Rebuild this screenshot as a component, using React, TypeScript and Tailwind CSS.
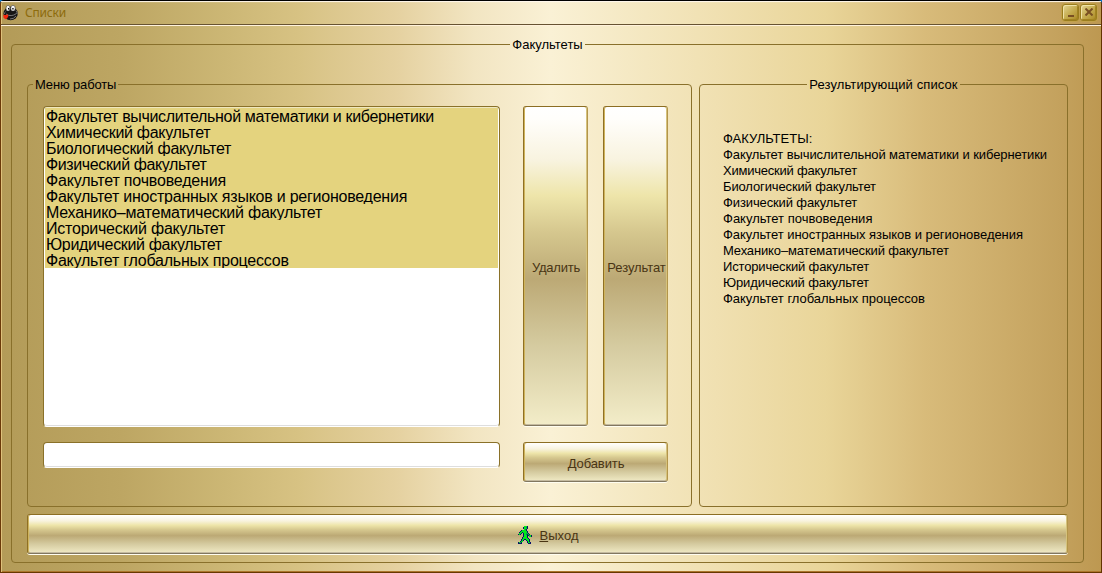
import type { ReactNode } from "react";

type Line = { text: string; list: string; result: string };

const faculties: Line[] = [
  { text: "Факультет вычислительной математики и кибернетики", list: "tracking-[-0.345px]", result: "tracking-[-0.1px]" },
  { text: "Химический факультет", list: "tracking-[-0.3px]", result: "tracking-[-0.22px]" },
  { text: "Биологический факультет", list: "tracking-[-0.3px]", result: "tracking-[-0.13px]" },
  { text: "Физический факультет", list: "tracking-[-0.38px]", result: "tracking-[-0.12px]" },
  { text: "Факультет почвоведения", list: "tracking-[-0.18px]", result: "tracking-[0px]" },
  { text: "Факультет иностранных языков и регионоведения", list: "tracking-[-0.235px]", result: "tracking-[-0.045px]" },
  { text: "Механико–математический факультет", list: "tracking-[-0.23px]", result: "tracking-[-0.14px]" },
  { text: "Исторический факультет", list: "tracking-[-0.23px]", result: "tracking-[-0.16px]" },
  { text: "Юридический факультет", list: "tracking-[-0.34px]", result: "tracking-[-0.13px]" },
  { text: "Факультет глобальных процессов", list: "tracking-[-0.23px]", result: "tracking-[-0.03px]" },
];

const walkerRows = [
  "......gggb....",
  ".....bggtb....",
  ".....bgggb....",
  "......gtb.....",
  "...bggggb.....",
  "..bggggggb....",
  ".bggbggggb....",
  ".ggb.bggtgb...",
  "bgb..bggtbgb..",
  ".....bgggbbggb",
  ".....bgggb.ggb",
  "....bggggb....",
  "....bgggggb...",
  "...bggbbgggb..",
  "...bgb..bggb..",
  "..bgg....bgb..",
  "bggb.....bggb.",
  "bbbb......bbb.",
];

const walkerColors: Record<string, string> = { g: "#00e81c", b: "#08106a", t: "#008a56" };

function MascotIcon() {
  return (
    <svg viewBox="0 0 16 16" className="h-4 w-4 shrink-0">
      <ellipse cx="7.600" cy="8.500" rx="7.200" ry="6.800" fill="#161616" />
      <path d="M2.500 6.500q-1 1-1 2.500M12.800 5.500q1.500 1.500 1.400 3.500" stroke="#6d6d6d" strokeWidth="1" fill="none" />
      <ellipse cx="5" cy="3.200" rx="2" ry="2.900" fill="#f4f4f4" stroke="#222" strokeWidth=".5" />
      <ellipse cx="10" cy="3.200" rx="2.300" ry="2.900" fill="#f4f4f4" stroke="#222" strokeWidth=".5" />
      <path d="M5 3h1.300v1.500H5zM9.300 3h1.300v1.500H9.300z" fill="#000" />
      <path d="M3 9q5 3.500 10.500-.5M7 14q4 0 6-3" stroke="#8f8f8f" strokeWidth=".8" fill="none" />
      <path d="M.3 9.800l2.700.2 1.800-.8 .6 2-1.400 2.200-1.500.9-2-1.500z" fill="#f3260d" />
    </svg>
  );
}

function WalkerIcon() {
  return (
    <svg viewBox="0 0 14 18" className="-mt-[3px] h-[18px] w-[14px]" shapeRendering="crispEdges">
      {walkerRows.flatMap((row, y) =>
        [...row].map((c, x) =>
          c === "." ? null : <rect key={x + "-" + y} x={x} y={y} width="1" height="1" fill={walkerColors[c]} />,
        ),
      )}
    </svg>
  );
}

function Caption({ children }: { children: ReactNode }) {
  return (
    <button className="flex h-[17px] w-[17px] items-center justify-center rounded-[3px] border border-[#9a7d1e] bg-linear-to-br from-[#e3d591] via-[#c6ad50] to-[#a98820] shadow-[inset_1px_1px_0_#efe2a6,inset_-1px_-1px_0_#a38420,0_0_0_1px_#c2a14b]">
      {children}
    </button>
  );
}

function GoldButton({ className, children }: { className: string; children: ReactNode }) {
  return (
    <button
      className={
        "flex items-center justify-center overflow-hidden whitespace-nowrap rounded-[3px] border border-t-[#8c6e23] border-r-[#b3954a] border-b-[#817760] border-l-[#8f7024] bg-[linear-gradient(180deg,#fff_0%,#fffefb_4%,#f8f3df_17%,#eee5aa_28%,#d6c88f_39%,#bca975_54%,#d5cba0_75%,#f3edc9_100%)] bg-origin-border pt-[4px] text-[13px] text-[#493514] shadow-[inset_1px_0_0_#cfb45c,inset_-1px_0_0_#d5c27c,inset_0_-1px_0_#c4baa0,0_1px_0_#fffdf0] " +
        className
      }
    >
      {children}
    </button>
  );
}

const groupBorder = "min-w-0 rounded-[4px] border border-[#89702b]";

export default function App() {
  return (
    <div className="h-[573px] w-[1102px] overflow-hidden bg-[#087bd4] font-['Liberation_Sans',Arial,sans-serif] text-black">
      <div className="flex h-full w-full flex-col rounded-t-[4px] border border-t-black border-r-[#633400] border-b-[#673800] border-l-[#6a3908] bg-[linear-gradient(90deg,#b39b58_0%,#bda663_11%,#cdb876_21%,#d7c283_27%,#e5d1a0_36%,#f2e5c2_43%,#faf1d5_50%,#f5e9c4_57%,#f0e0b1_65%,#e9d599_75%,#d8bb7a_84%,#c4a25e_96%,#bd9851_100%)] shadow-[inset_1px_0_0_#dfc17c,inset_0_-1px_0_#ad762c]">
        <header className="flex h-[24px] shrink-0 items-center border-b border-[#675332] pr-[4px] pl-[2px] shadow-[inset_0_2px_1px_-1px_#fff8ef,0_1px_0_#fff2dc]">
          <MascotIcon />
          <span className="mt-px ml-[6px] font-['Noto_Sans',sans-serif] text-[12px] leading-4 tracking-[-0.2px] text-[#8d6b0c]">
            Списки
          </span>
          <div className="mb-px ml-auto flex gap-px">
            <Caption>
              <span className="mt-[7px] h-[2px] w-[6px] bg-[#795022]" />
            </Caption>
            <Caption>
              <svg viewBox="0 0 8 8" className="h-2 w-2">
                <path d="M.5.5l7 7M7.500.5l-7 7" stroke="#795022" strokeWidth="2" />
              </svg>
            </Caption>
          </div>
        </header>

        <fieldset className={"mt-[12px] mr-[17px] ml-[10px] h-[526px] shrink-0 px-[15px] " + groupBorder}>
          <legend className="mx-auto h-[15px] px-[2px] text-[13px] leading-[15px]">Факультеты</legend>
          <div className="mt-[25px] flex h-[430px] gap-[7px]">
            <fieldset className={"w-[665px] shrink-0 px-[15px] " + groupBorder}>
              <legend className="-ml-[10px] h-[15px] px-[2px] text-[13px] leading-[15px] tracking-[-0.15px]">
                Меню работы
              </legend>
              <div className="mt-[14px] grid grid-cols-[457px_65px_65px] gap-x-[15px] gap-y-[15px]">
                <ul className="h-[321px] overflow-hidden rounded-[4px] border border-x-[#8a7129] border-t-[#8a7129] border-b-white bg-white p-px shadow-[inset_0_1px_0_#efe7c0,inset_0_-1px_0_#dedede]">
                  {faculties.map((f) => (
                    <li
                      key={f.text}
                      className="h-4 overflow-hidden bg-[#e4d37e] pl-px text-[16px] leading-[18px] whitespace-nowrap"
                    >
                      <span className={f.list}>{f.text}</span>
                    </li>
                  ))}
                </ul>
                <GoldButton className="ml-[8px] h-[320px] w-[65px] pl-px tracking-[-0.2px]">Удалить</GoldButton>
                <GoldButton className="ml-[8px] h-[320px] w-[65px] pl-[2px] tracking-[-0.08px]">Результат</GoldButton>
                <input className="h-[26px] rounded-[4px] border border-x-[#8a7129] border-t-[#8a7129] border-b-white bg-white px-1 shadow-[inset_0_-1px_0_#dedede] outline-none" />
                <GoldButton className="col-span-2 ml-[8px] h-[40px] w-[145px] pl-px tracking-[-0.1px]">Добавить</GoldButton>
              </div>
            </fieldset>
            <fieldset className={"w-[369px] shrink-0 px-[23px] " + groupBorder}>
              <legend className="mx-auto h-[15px] px-[2px] text-[13px] leading-[15px] tracking-[0.1px]">
                Результирующий список
              </legend>
              <div className="mt-[39px] text-[13px] leading-4 whitespace-nowrap">
                <p>
                  <span>ФАКУЛЬТЕТЫ:</span>
                </p>
                {faculties.map((f) => (
                  <p key={f.text}>
                    <span className={f.result}>{f.text}</span>
                  </p>
                ))}
              </div>
            </fieldset>
          </div>
          <GoldButton className="mt-[7px] h-[40px] w-[1041px] gap-[7px] pl-[2px]">
            <WalkerIcon />
            <span className="tracking-[0.05px]">
              <u>В</u>ыход
            </span>
          </GoldButton>
        </fieldset>
      </div>
    </div>
  );
}
